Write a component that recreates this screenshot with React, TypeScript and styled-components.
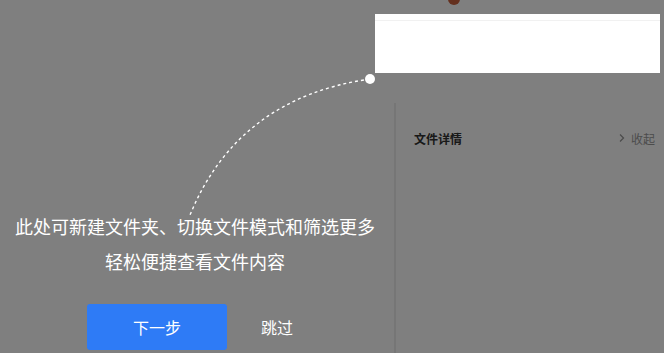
import styled, { createGlobalStyle } from "styled-components";

const GlobalStyle = createGlobalStyle`
  html, body {
    margin: 0;
    padding: 0;
    background: #ffffff;
  }
  body {
    font-family: "Noto Sans CJK SC", "Noto Sans", sans-serif;
  }
  * {
    box-sizing: border-box;
  }
`;

const Screen = styled.div`
  position: relative;
  width: 664px;
  height: 353px;
  overflow: hidden;
  background: #ffffff;
`;

const Page = styled.div`
  display: flex;
  height: 100%;
`;

const MainArea = styled.div`
  flex: 1;
  min-width: 0;
  display: flex;
  flex-direction: column;
`;

const TopBar = styled.div`
  height: 14px;
`;

const DetailPanel = styled.aside`
  position: relative;
  width: 270px;
  margin-top: 103px;
  border-left: 2px solid #ececec;
  padding: 0 9px 0 18px;
`;

const LogoMark = styled.div`
  position: absolute;
  left: 52px;
  top: -104px;
  width: 12px;
  height: 6px;
  border-radius: 0 0 7px 7px;
  background: #c9603c;
`;

const PanelHeader = styled.div`
  display: flex;
  align-items: center;
  justify-content: space-between;
  height: 70px;
`;

const PanelTitle = styled.div`
  font-size: 12px;
  font-weight: 700;
  color: #333333;
`;

const CollapseLink = styled.div`
  display: flex;
  align-items: center;
  gap: 5px;
  font-size: 12px;
  color: #999999;
`;

const Mask = styled.div`
  position: absolute;
  inset: 0;
  background: rgba(0, 0, 0, 0.5);
`;

const Spotlight = styled.div`
  position: absolute;
  left: 375px;
  top: 14px;
  width: 285px;
  height: 59px;
  background: #ffffff;
  padding-top: 6px;
`;

const SpotlightRule = styled.div`
  height: 1px;
  background: #f1f1f1;
`;

const Connector = styled.svg`
  position: absolute;
  left: 0;
  top: 0;
  pointer-events: none;
`;

const Guide = styled.div`
  position: absolute;
  left: 0;
  top: 209px;
  width: 390px;
  display: flex;
  flex-direction: column;
`;

const GuideText = styled.p`
  margin: 0;
  font-size: 18px;
  line-height: 35px;
  color: #ffffff;
  text-align: center;
  white-space: nowrap;
`;

const Actions = styled.div`
  display: flex;
  align-items: center;
  gap: 34px;
  margin-top: 25px;
  padding-left: 87px;
`;

const NextButton = styled.button`
  width: 140px;
  height: 46px;
  border: none;
  border-radius: 3px;
  background: #2e7bf6;
  color: #ffffff;
  font-family: inherit;
  font-size: 16px;
  cursor: pointer;
`;

const SkipButton = styled.button`
  padding: 0;
  border: none;
  background: none;
  color: #ffffff;
  font-family: inherit;
  font-size: 16px;
  cursor: pointer;
`;

const Chevron = () => (
  <svg width="8" height="10" viewBox="0 0 8 10">
    <path d="M2 1.5 L5.5 5 L2 8.5" fill="none" stroke="#999" strokeWidth="1.3" />
  </svg>
);

const App = () => {
  return (
    <>
      <GlobalStyle />
      <Screen>
        <Page>
          <MainArea>
            <TopBar />
          </MainArea>
          <DetailPanel>
            <LogoMark />
            <PanelHeader>
              <PanelTitle>文件详情</PanelTitle>
              <CollapseLink>
                <Chevron />
                收起
              </CollapseLink>
            </PanelHeader>
          </DetailPanel>
        </Page>
        <Mask />
        <Spotlight>
          <SpotlightRule />
        </Spotlight>
        <Connector width="664" height="353" viewBox="0 0 664 353">
          <path
            d="M370 79 Q 238 98 190 215"
            fill="none"
            stroke="#ffffff"
            strokeWidth="1.4"
            strokeDasharray="3 3"
          />
          <circle cx="370" cy="79" r="5" fill="#ffffff" />
        </Connector>
        <Guide>
          <GuideText>此处可新建文件夹、切换文件模式和筛选更多</GuideText>
          <GuideText>轻松便捷查看文件内容</GuideText>
          <Actions>
            <NextButton>下一步</NextButton>
            <SkipButton>跳过</SkipButton>
          </Actions>
        </Guide>
      </Screen>
    </>
  );
};

export default App;
